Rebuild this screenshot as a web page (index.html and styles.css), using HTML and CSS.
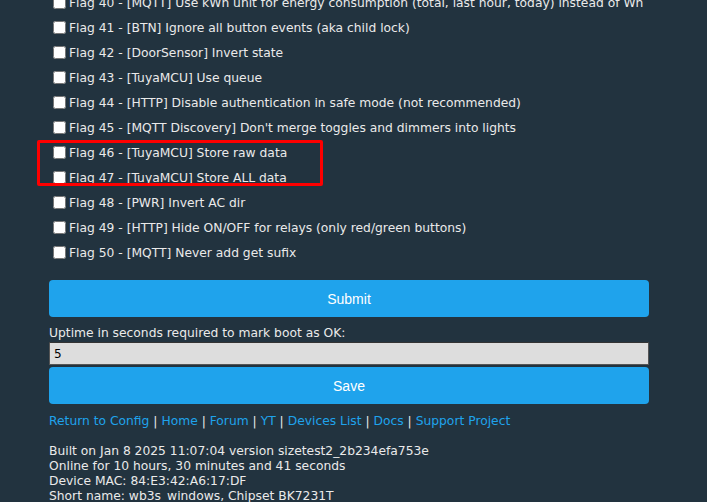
FILE: index.html
```html
<!DOCTYPE html>
<html lang="en">
<head>
  <meta charset="UTF-8">
  <meta name="viewport" content="width=device-width, initial-scale=1.0">
  <title>Flags</title>
  <link rel="stylesheet" href="styles.css">
</head>
<body>
  <div class="main">
    <form class="flags">
      <div class="flag"><input type="checkbox" id="f40"><label for="f40">Flag 40 - [MQTT] Use kWh unit for energy consumption (total, last hour, today) instead of Wh</label></div>
      <div class="flag"><input type="checkbox" id="f41"><label for="f41">Flag 41 - [BTN] Ignore all button events (aka child lock)</label></div>
      <div class="flag"><input type="checkbox" id="f42"><label for="f42">Flag 42 - [DoorSensor] Invert state</label></div>
      <div class="flag"><input type="checkbox" id="f43"><label for="f43">Flag 43 - [TuyaMCU] Use queue</label></div>
      <div class="flag"><input type="checkbox" id="f44"><label for="f44">Flag 44 - [HTTP] Disable authentication in safe mode (not recommended)</label></div>
      <div class="flag"><input type="checkbox" id="f45"><label for="f45">Flag 45 - [MQTT Discovery] Don't merge toggles and dimmers into lights</label></div>
      <div class="marked">
        <div class="flag"><input type="checkbox" id="f46"><label for="f46">Flag 46 - [TuyaMCU] Store raw data</label></div>
        <div class="flag"><input type="checkbox" id="f47"><label for="f47">Flag 47 - [TuyaMCU] Store ALL data</label></div>
        <div class="redbox"></div>
      </div>
      <div class="flag"><input type="checkbox" id="f48"><label for="f48">Flag 48 - [PWR] Invert AC dir</label></div>
      <div class="flag"><input type="checkbox" id="f49"><label for="f49">Flag 49 - [HTTP] Hide ON/OFF for relays (only red/green buttons)</label></div>
      <div class="flag"><input type="checkbox" id="f50"><label for="f50">Flag 50 - [MQTT] Never add get sufix</label></div>
      <button type="submit" class="btn btn-submit">Submit</button>
    </form>

    <form class="uptime">
      <label for="boot">Uptime in seconds required to mark boot as OK:</label>
      <input type="text" id="boot" value="5">
      <button type="submit" class="btn">Save</button>
    </form>

    <div class="links">
      <a href="#">Return to Config</a> | <a href="#">Home</a> | <a href="#">Forum</a> | <a href="#">YT</a> | <a href="#">Devices List</a> | <a href="#">Docs</a> | <a href="#">Support Project</a>
    </div>

    <div class="info">
      Built on Jan 8 2025 11:07:04 version sizetest2_2b234efa753e<br>
      Online for 10 hours, 30 minutes and 41 seconds<br>
      Device MAC: 84:E3:42:A6:17:DF<br>
      Short name: wb3s_windows, Chipset BK7231T
    </div>
  </div>
</body>
</html>
```

FILE: styles.css
```css
/* page */
* {
  box-sizing: border-box;
}

body {
  margin: 0;
  background-color: #22333f;
  color: #eaeaea;
  font-family: "DejaVu Sans", Verdana, sans-serif;
  font-size: 12.3px;
  overflow: hidden;
}

.main {
  width: 600px;
  margin-left: 49px;
}

/* flag list */
.flags {
  margin-top: -10px;
}

.flag {
  display: flex;
  align-items: center;
  height: 25px;
  white-space: nowrap;
}

.flag input {
  width: 13px;
  height: 13px;
  margin: 0 3px 0 4px;
}

.marked {
  position: relative;
}

.redbox {
  position: absolute;
  left: -12px;
  top: 0;
  width: 286px;
  height: 46px;
  border: 3px solid #ff0000;
  border-radius: 2px;
  pointer-events: none;
}

/* buttons */
.btn {
  display: block;
  width: 100%;
  height: 37px;
  border: none;
  border-radius: 4px;
  background-color: #1fa3ec;
  color: #ffffff;
  font-family: "Liberation Sans", Arial, sans-serif;
  font-size: 14px;
  cursor: pointer;
}

.btn-submit {
  margin-top: 15px;
}

/* uptime form */
.uptime {
  margin-top: 9px;
}

.uptime label {
  display: block;
  line-height: 15px;
}

.uptime input {
  display: block;
  width: 100%;
  height: 23px;
  margin: 1px 0 2px;
  padding: 0 4px;
  background-color: #dddddd;
  border: 1px solid #555555;
  border-top-color: #333333;
  color: #000000;
  font-family: "DejaVu Sans", Verdana, sans-serif;
  font-size: 12px;
}

/* links */
.links {
  margin-top: 10px;
  line-height: 15px;
}

.links a {
  color: #1fa3ec;
  text-decoration: none;
}

/* info */
.info {
  margin-top: 15px;
  line-height: 15px;
}
```
